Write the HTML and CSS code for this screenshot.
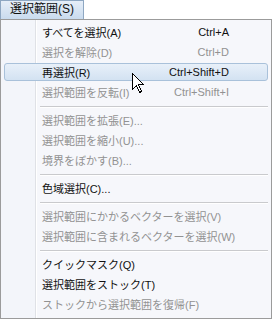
FILE: index.html
```html
<!DOCTYPE html>
<html lang="ja">
<head>
<meta charset="utf-8">
<link rel="stylesheet" href="styles.css">
</head>
<body>
<div class="menubar">
  <div class="menu-title">選択範囲(S)</div>
</div>
<div class="menu">
  <div class="item"><span class="label">すべてを選択(A)</span><span class="key">Ctrl+A</span></div>
  <div class="item disabled"><span class="label">選択を解除(D)</span><span class="key">Ctrl+D</span></div>
  <div class="item active"><span class="label">再選択(R)</span><span class="key">Ctrl+Shift+D</span></div>
  <div class="item disabled"><span class="label">選択範囲を反転(I)</span><span class="key">Ctrl+Shift+I</span></div>
  <div class="sep"></div>
  <div class="item disabled"><span class="label">選択範囲を拡張(E)...</span></div>
  <div class="item disabled"><span class="label">選択範囲を縮小(U)...</span></div>
  <div class="item disabled"><span class="label">境界をぼかす(B)...</span></div>
  <div class="sep"></div>
  <div class="item"><span class="label">色域選択(C)...</span></div>
  <div class="sep"></div>
  <div class="item disabled"><span class="label">選択範囲にかかるベクターを選択(V)</span></div>
  <div class="item disabled"><span class="label">選択範囲に含まれるベクターを選択(W)</span></div>
  <div class="sep"></div>
  <div class="item"><span class="label">クイックマスク(Q)</span></div>
  <div class="item"><span class="label">選択範囲をストック(T)</span></div>
  <div class="item disabled"><span class="label">ストックから選択範囲を復帰(F)</span></div>
  <svg class="cursor" width="13" height="21" viewBox="0 0 13 21">
    <path d="M0.5 0.5 L0.5 16.5 L4.5 12.5 L7.5 19.5 L9.5 18.5 L6.5 11.5 L11.5 11.5 Z" fill="#fff" stroke="#000" stroke-width="1" shape-rendering="crispEdges"/>
  </svg>
</div>
</body>
</html>
```

FILE: styles.css
```css
* { box-sizing: border-box; }
html, body { margin: 0; padding: 0; background: #fff; }
body {
  width: 272px;
  height: 319px;
  font-family: "Liberation Sans", "Noto Sans CJK JP", sans-serif;
  font-size: 11px;
  color: #111;
  overflow: hidden;
}
.menubar {
  display: flex;
  height: 19px;
}
.menu-title {
  width: 84px;
  height: 19px;
  padding-left: 9px;
  line-height: 17px;
  font-size: 12px;
  border: 1px solid #8ea7c2;
  border-bottom: none;
  background: linear-gradient(#e6eef8, #c9dbee);
}
.menu {
  position: relative;
  height: 300px;
  border: 1px solid #9b9b9b;
  padding: 2px 3px;
  background: linear-gradient(to right, #f3f5fa 34px, #dfe1e6 34px, #dfe1e6 35px, #ffffff 35px, #ffffff 36px, #f6f7fb 36px);
}
.item {
  display: flex;
  align-items: center;
  height: 20px;
  padding-left: 38px;
  padding-right: 39px;
  white-space: nowrap;
}
.item .key { margin-left: auto; }
.item.disabled { color: #929292; }
.item.active {
  height: 18px;
  margin: 1px 0;
  padding-left: 37px;
  padding-right: 38px;
  border: 1px solid #a9c1da;
  border-radius: 3px;
  background: linear-gradient(#e8f0f9, #d3e2f2);
}
.sep {
  height: 8px;
  margin-left: 36px;
  padding-top: 4px;
}
.sep::before {
  content: "";
  display: block;
  height: 1px;
  background: #c9cacd;
  border-bottom: 1px solid #fff;
  box-sizing: content-box;
}
.cursor {
  position: absolute;
  left: 131px;
  top: 53px;
}
```
